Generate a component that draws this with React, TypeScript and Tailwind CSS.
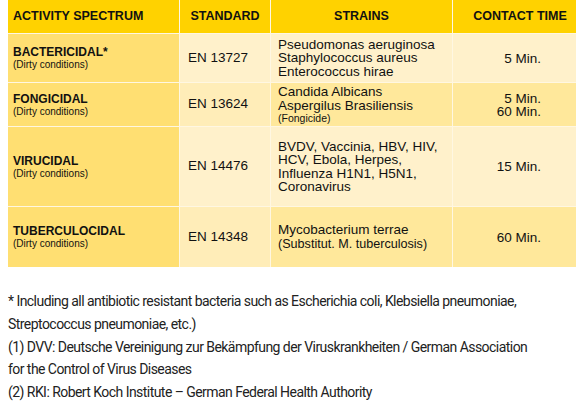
const rows = [
  {
    name: 'BACTERICIDAL*',
    std: 'EN 13727',
    strains: ['Pseudomonas aeruginosa', 'Staphylococcus aureus', 'Enterococcus hirae'],
    note: '',
    times: ['5 Min.'],
    h: 'h-[48px]',
    light: true,
  },
  {
    name: 'FONGICIDAL',
    std: 'EN 13624',
    strains: ['Candida Albicans', 'Aspergilus Brasiliensis'],
    note: '(Fongicide)',
    times: ['5 Min.', '60 Min.'],
    h: 'h-[43px]',
    light: false,
  },
  {
    name: 'VIRUCIDAL',
    std: 'EN 14476',
    strains: ['BVDV, Vaccinia, HBV, HIV,', 'HCV, Ebola, Herpes,', 'Influenza H1N1, H5N1,', 'Coronavirus'],
    note: '',
    times: ['15 Min.'],
    h: 'h-[79px]',
    light: true,
  },
  {
    name: 'TUBERCULOCIDAL',
    std: 'EN 14348',
    strains: ['Mycobacterium terrae'],
    note: '(Substitut. M. tuberculosis)',
    times: ['60 Min.'],
    h: 'h-[60px]',
    light: false,
  },
]

export default function App() {
  return (
    <div className="w-[576px] h-[408px] overflow-hidden bg-white">
      <div className="ml-[8px] grid grid-cols-[171px_90px_181px_123px] gap-px bg-[#FFF7E2] font-['Liberation_Sans',Arial,sans-serif] text-[#111]">
        {/* header */}
        <div className="h-[33px] bg-[#FFD200] pl-[5px] flex items-center text-[12.5px] font-bold">ACTIVITY SPECTRUM</div>
        <div className="h-[33px] bg-[#FFD200] flex items-center justify-center text-[12.5px] font-bold">STANDARD</div>
        <div className="h-[33px] bg-[#FFD200] flex items-center justify-center text-[12.5px] font-bold">STRAINS</div>
        <div className="h-[33px] bg-[#FFD200] flex items-center justify-center pl-[11px] text-[12.5px] font-bold">CONTACT TIME</div>

        {rows.map(r => (
          <div key={r.name} className="contents">
            <div className={`${r.h} bg-[#FFDF72] pl-[5px] flex flex-col justify-center`}>
              <span className="text-[12px] font-bold leading-[13px]">{r.name}</span>
              <span className="text-[10px] leading-[11px]">(Dirty conditions)</span>
            </div>
            <div className={`${r.h} ${r.light ? 'bg-[#FFF1CB]' : 'bg-[#FFEDB8]'} pl-[8px] flex items-center text-[13.5px]`}>
              {r.std}
            </div>
            <div className={`${r.h} ${r.light ? 'bg-[#FFF1CB]' : 'bg-[#FFE89B]'} pl-[7px] flex flex-col justify-center text-[13.5px] leading-[13.4px]`}>
              {r.strains.map(s => (
                <span key={s}>{s}</span>
              ))}
              {r.note && (
                <span className={r.name === 'FONGICIDAL' ? 'text-[10.5px] leading-[12px]' : 'mt-px text-[12.6px] leading-[14px]'}>
                  {r.note}
                </span>
              )}
            </div>
            <div className={`${r.h} ${r.light ? 'bg-[#FFF1CB]' : 'bg-[#FFE89B]'} pr-[35px] flex flex-col justify-center items-end text-[13.5px] leading-[13px]`}>
              {r.times.map(t => (
                <span key={t}>{t}</span>
              ))}
            </div>
          </div>
        ))}
      </div>

      <div className="ml-[8px] mt-[23px] w-[520px] font-['Roboto',sans-serif] text-[14px] tracking-[-0.55px] leading-[22.8px] text-[#222]">
        <p>* Including all antibiotic resistant bacteria such as Escherichia coli, Klebsiella pneumoniae, Streptococcus pneumoniae, etc.)</p>
        <p>(1) DVV: Deutsche Vereinigung zur Bekämpfung der Viruskrankheiten / German Association for the Control of Virus Diseases</p>
        <p>(2) RKI: Robert Koch Institute – German Federal Health Authority</p>
      </div>
    </div>
  )
}
